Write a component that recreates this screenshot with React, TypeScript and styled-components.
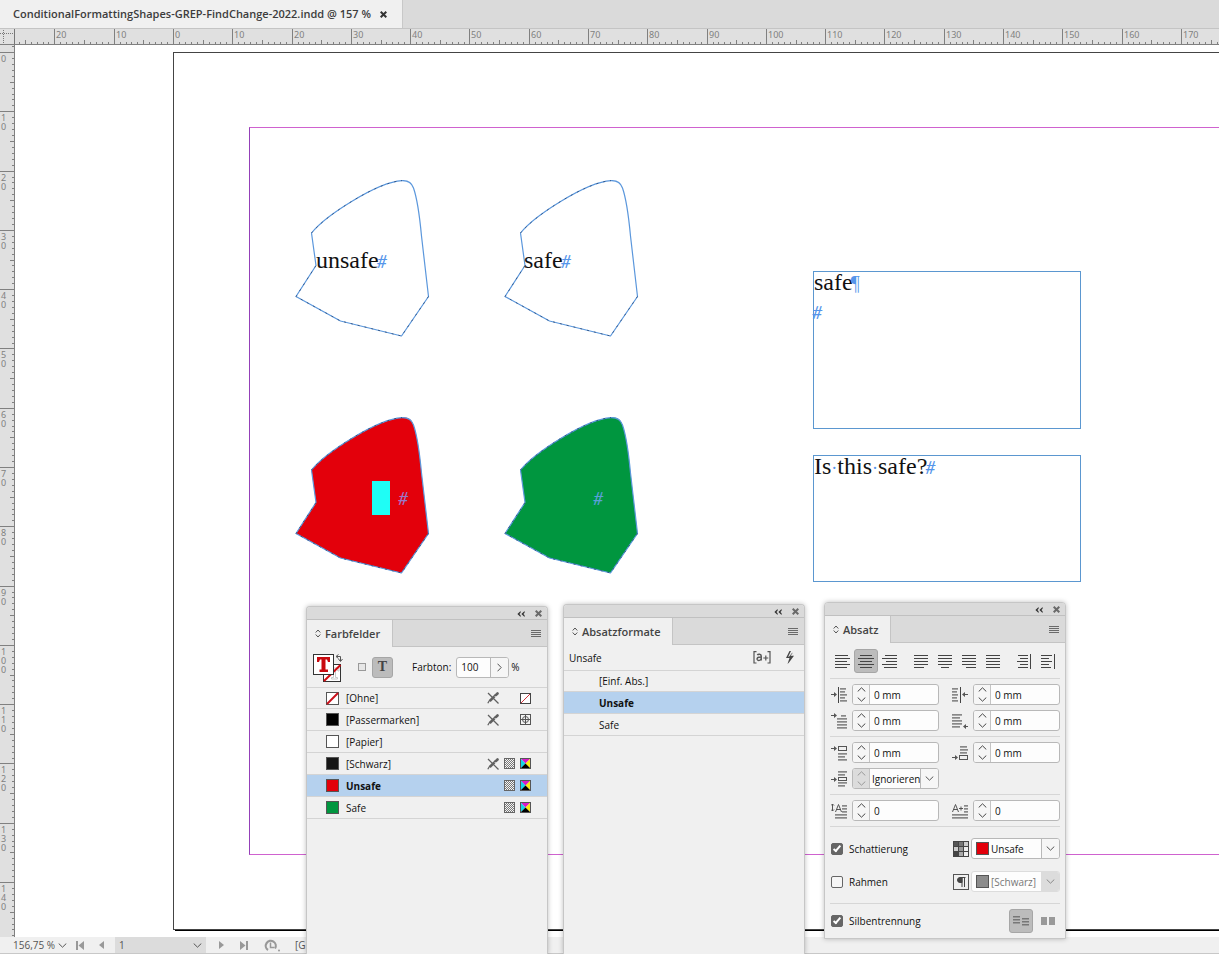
import React, { useEffect, useState } from "react";
import styled, { createGlobalStyle } from "styled-components";

const UI = '"Open Sans", "Noto Sans", sans-serif';
const MM = 59.29 / 10;

const GlobalStyle = createGlobalStyle`
  *, *::before, *::after { box-sizing: border-box; }
  body { margin: 0; background: #f0f0f0; font-family: ${UI}; font-size: 10px; line-height: 14px; color: #111; }
  button, input, select { font: inherit; color: inherit; margin: 0; padding: 0; border: 0; background: none; outline: none; }
  svg { display: block; flex: none; }
`;

const Window = styled.div`
  position: relative;
  height: 100vh;
  display: flex;
  flex-direction: column;
  overflow: hidden;
`;

/* ---------- document tab ---------- */
const TabBar = styled.header`
  height: 29px;
  display: flex;
  background: #dadada;
  border-bottom: 1px solid #c4c4c4;
`;
const DocTab = styled.div`
  display: flex;
  align-items: center;
  gap: 9px;
  padding: 0 15px 0 13px;
  background: #f0f0f0;
  border-right: 1px solid #c8c8c8;
  color: #3c3c3c;
  font-size: 11px;
  font-weight: 600;
  white-space: nowrap;
`;
const IconButton = styled.button`
  display: flex;
  align-items: center;
  justify-content: center;
  color: #6a6a6a;
`;
const CloseTab = styled(IconButton)`
  color: #333;
`;

/* ---------- rulers ---------- */
const RulerRow = styled.div`
  display: flex;
  height: 16px;
  overflow: hidden;
  background: #e0e0e0;
  border-bottom: 1px solid #808080;
`;
const Workspace = styled.div`
  flex: 1;
  min-height: 0;
  display: flex;
`;
const SideRuler = styled.div`
  width: 15px;
  overflow: hidden;
  background: #e0e0e0;
  border-right: 1px solid #808080;
`;
const RulerDrawing = styled.svg`
  font-family: "Noto Sans", sans-serif;
  font-size: 9px;
  fill: #808080;
`;

/* ---------- canvas ---------- */
const Canvas = styled.main`
  position: relative;
  flex: 1;
  min-width: 0;
  overflow: hidden;
  background: #fff;
`;
const Page = styled.div`
  position: absolute;
  left: 158px;
  top: 7px;
  width: 1245px;
  height: 878px;
  padding: 74px 75px;
  border: 1px solid #444;
  box-shadow: 2px 1px 0 #000;
  display: flex;
`;
const Margins = styled.div`
  flex: 1;
  border: 1px solid #cf62cf;
  border-left-color: #9440b8;
`;
const Item = styled.div<{ $x: number; $y: number }>`
  position: absolute;
  left: ${(p) => p.$x}px;
  top: ${(p) => p.$y}px;
`;
const StoryText = styled.p`
  margin: 0;
  font-family: "Liberation Serif", serif;
  font-size: 24px;
  line-height: 18px;
  white-space: nowrap;
  color: #111;
`;
const TextFrame = styled(Item)<{ $h: number }>`
  width: 268px;
  height: ${(p) => p.$h}px;
  padding-top: 1px;
  border: 1px solid #5b97d0;
  display: flex;
  flex-direction: column;
  gap: 10px;
`;
const Mark = styled.span<{ $c?: string }>`
  margin-left: -2px;
  font-family: Lato, sans-serif;
  font-size: 18px;
  font-style: italic;
  line-height: 18px;
  color: ${(p) => p.$c ?? "#5595ea"};
`;
const Pilcrow = styled.span`
  margin-left: -2px;
  font-size: 20px;
  color: #5595ea;
`;
const SpaceDot = styled.span`
  font-size: 18px;
  color: #5595ea;
`;
const Selection = styled(Item)`
  width: 18px;
  height: 34px;
  background: #1ffdf5;
`;

/* ---------- status bar ---------- */
const StatusBar = styled.footer`
  height: 17px;
  display: flex;
  align-items: center;
  padding-left: 13px;
  background: #f0f0f0;
  border-bottom: 1px solid #c8c8c8;
  color: #555;
`;
const ZoomButton = styled.button`
  display: flex;
  align-items: center;
  gap: 3px;
  width: 57px;
  white-space: nowrap;
`;
const NavButton = styled(IconButton)<{ $w: number }>`
  width: ${(p) => p.$w}px;
  height: 16px;
  color: #999;
`;
const PageField = styled.label`
  display: flex;
  align-items: center;
  width: 91px;
  height: 16px;
  margin-left: 3px;
  padding: 0 4px;
  background: #dcdcdc;
  input { flex: 1; min-width: 0; }
`;

/* ---------- floating panels ---------- */
const Panel = styled.section<{ $x: number; $y: number; $open?: boolean }>`
  position: absolute;
  left: ${(p) => p.$x}px;
  top: ${(p) => p.$y}px;
  ${(p) => (p.$open ? "bottom: 0;" : "")}
  width: 242px;
  display: flex;
  flex-direction: column;
  background: #f0f0f0;
  border: 1px solid #c6c6c6;
  border-bottom-width: ${(p) => (p.$open ? 0 : 1)}px;
  border-radius: 4px 4px 0 0;
  box-shadow: 0 0 5px rgba(0, 0, 0, 0.25);
`;
const PanelGrip = styled.div`
  height: 13px;
  display: flex;
  align-items: center;
  justify-content: flex-end;
  gap: 10px;
  padding: 1px 5px 0 0;
  background: #dadada;
  border-bottom: 1px solid #c0c0c0;
  border-radius: 3px 3px 0 0;
`;
const PanelTabs = styled.div`
  height: 27px;
  display: flex;
  background: #dadada;
`;
const PanelTab = styled.h2`
  margin: 0;
  display: flex;
  align-items: center;
  gap: 4px;
  padding: 0 12px 0 8px;
  font-size: 11px;
  font-weight: 600;
  color: #444;
  background: #f0f0f0;
`;
const PanelTabRest = styled.div`
  flex: 1;
  display: flex;
  align-items: center;
  justify-content: flex-end;
  padding-right: 6px;
  border-left: 1px solid #c4c4c4;
  border-bottom: 1px solid #c4c4c4;
`;

/* swatches */
const TintBar = styled.div`
  height: 40px;
  display: flex;
  align-items: center;
  padding-left: 6px;
`;
const TargetGroup = styled.div`
  display: flex;
  align-items: center;
  gap: 6px;
  margin: 0 19px 0 14px;
`;
const ToggleButton = styled.button<{ $on?: boolean; $size: number }>`
  width: ${(p) => p.$size}px;
  height: ${(p) => p.$size}px;
  display: flex;
  align-items: center;
  justify-content: center;
  border-radius: 3px;
  color: #444;
  background: ${(p) => (p.$on ? "#bcbcbc" : "transparent")};
  border: 1px solid ${(p) => (p.$on ? "#a6a6a6" : "transparent")};
`;
const TLetter = styled.span`
  font-family: "Liberation Serif", serif;
  font-size: 14px;
  font-weight: 700;
`;
const TintLabel = styled.label`
  display: flex;
  align-items: center;
  gap: 5px;
`;
const Box = styled.div<{ $w: number; $off?: boolean }>`
  display: flex;
  width: ${(p) => p.$w}px;
  height: 21px;
  background: #fdfdfd;
  border: 1px solid ${(p) => (p.$off ? "#dcdcdc" : "#b8b8b8")};
  border-radius: 3px;
  overflow: hidden;
`;
const BoxInput = styled.input`
  flex: 1;
  min-width: 0;
  padding-left: 4px !important;
`;
const ArrowButton = styled.button<{ $off?: boolean }>`
  width: 18px;
  display: flex;
  align-items: center;
  justify-content: center;
  color: ${(p) => (p.$off ? "#888" : "#555")};
  background: ${(p) => (p.$off ? "#dcdcdc" : "#f6f6f6")} !important;
  border-left: 1px solid ${(p) => (p.$off ? "#dcdcdc" : "#b8b8b8")} !important;
`;
const Percent = styled.span`
  margin-left: 2px;
`;

const List = styled.ul`
  list-style: none;
  margin: 0;
  padding: 0;
`;
const Row = styled.li<{ $sel?: boolean; $indent: number }>`
  height: 22px;
  display: flex;
  align-items: center;
  gap: 7px;
  padding: 0 16px 0 ${(p) => p.$indent}px;
  border-bottom: 1px solid #d4d4d4;
  background: ${(p) => (p.$sel ? "#b5d1ee" : "transparent")};
  font-weight: ${(p) => (p.$sel ? 700 : 400)};
  &:first-child { border-top: 1px solid #d4d4d4; }
`;
const RowName = styled.span`
  flex: 1;
`;
const RowIcons = styled.span`
  display: grid;
  grid-template-columns: 12px 11px 11px;
  gap: 5px;
  align-items: center;
`;
const Swatch = styled.span<{ $c: string }>`
  flex: none;
  width: 13px;
  height: 13px;
  background: ${(p) => p.$c};
  border: 1px solid #555;
`;

/* paragraph styles */
const StyleBar = styled.div`
  height: 25px;
  display: flex;
  align-items: center;
  gap: 14px;
  padding: 0 9px 0 5px;
  span { flex: 1; }
`;

/* paragraph */
const ParaBody = styled.div`
  display: flex;
  flex-direction: column;
  padding: 6px 5px 0;
`;
const AlignBar = styled.div`
  display: flex;
  gap: 7px;
  padding-bottom: 5px;
`;
const AlignGroup = styled.div`
  display: flex;
`;
const Section = styled.div`
  display: flex;
  flex-direction: column;
  gap: 5px;
  padding: 5px 0;
  border-top: 1px solid #d6d6d6;
`;
const FieldRow = styled.div`
  display: grid;
  grid-template-columns: 121px 108px;
  padding-left: 1px;
`;
const FieldLabel = styled.div`
  display: flex;
  align-items: center;
  gap: 5px;
`;
const Stepper = styled.div<{ $off?: boolean }>`
  width: 17px;
  display: flex;
  flex-direction: column;
  align-items: center;
  justify-content: center;
  gap: 5px;
  background: ${(p) => (p.$off ? "#dcdcdc" : "#f6f6f6")};
  border-right: 1px solid #c4c4c4;
  button { color: ${(p) => (p.$off ? "#999" : "#444")}; }
`;
const Picker = styled.select<{ $off?: boolean }>`
  appearance: none;
  flex: 1;
  min-width: 0;
  padding-left: 2px !important;
  color: ${(p) => (p.$off ? "#777" : "#111")} !important;
  opacity: 1;
`;
const OptionRow = styled.div`
  display: flex;
  align-items: center;
  justify-content: space-between;
  height: 33px;
  padding-left: 1px;
`;
const Options = styled(Section)`
  gap: 0;
`;
const CheckLabel = styled.label`
  display: flex;
  align-items: center;
  gap: 6px;
`;
const Check = styled.input`
  appearance: none;
  position: relative;
  width: 12px;
  height: 12px;
  border: 1px solid #666 !important;
  border-radius: 2px;
  background: #f6f6f6 !important;
  &:checked { background: #666 !important; }
  &:checked::after {
    content: "";
    position: absolute;
    left: 3px;
    top: 0;
    width: 4px;
    height: 8px;
    border: solid #fff;
    border-width: 0 2px 2px 0;
    transform: rotate(40deg);
  }
`;
const ColorGroup = styled.div`
  display: flex;
  align-items: center;
  gap: 2px;
`;
const PickerSwatch = styled(Swatch)<{ $c: string }>`
  align-self: center;
  margin-left: 4px;
`;
const HyphenRow = styled(OptionRow)`
  height: 24px;
`;
const ColumnGroup = styled.div`
  display: flex;
  gap: 3px;
`;

/* ---------- drawings ---------- */
const useWindowSize = () => {
  const [size, setSize] = useState({ w: window.innerWidth, h: window.innerHeight });
  useEffect(() => {
    const onResize = () => setSize({ w: window.innerWidth, h: window.innerHeight });
    window.addEventListener("resize", onResize);
    return () => window.removeEventListener("resize", onResize);
  }, []);
  return size;
};

const HRuler = ({ length }: { length: number }) => (
  <RulerDrawing width={length} height="15">
    {Array.from({ length: Math.ceil(length / MM) }, (_, i) => i - 26).map((mm) => {
      const x = Math.round(158 + mm * MM);
      const h = mm % 10 === 0 ? 15 : mm % 5 === 0 ? 4 : 2;
      return <rect key={mm} x={x} y={15 - h} width="1" height={h} />;
    })}
    {Array.from({ length: Math.floor((length - 178) / (10 * MM)) + 3 }, (_, i) => i - 2).map((n) => (
      <text key={n} x={Math.round(158 + n * 10 * MM) + 2} y="9">
        {Math.abs(n * 10)}
      </text>
    ))}
  </RulerDrawing>
);

const VRuler = ({ length }: { length: number }) => (
  <RulerDrawing width="14" height={length}>
    {Array.from({ length: Math.ceil(length / MM) }, (_, i) => i - 1).map((mm) => {
      const y = Math.round(7 + mm * MM);
      const w = mm % 10 === 0 ? 14 : mm % 5 === 0 ? 4 : 2;
      return <rect key={mm} x={14 - w} y={y} width={w} height="1" />;
    })}
    {Array.from({ length: Math.floor((length - 45) / (10 * MM)) + 1 }, (_, n) =>
      String(n * 10)
        .split("")
        .map((d, i) => (
          <text key={`${n}-${i}`} x="1" y={Math.round(7 + n * 10 * MM) + 10 + i * 9}>
            {d}
          </text>
        ))
    )}
  </RulerDrawing>
);

const Origin = () => (
  <svg width="15" height="15" stroke="#777" strokeDasharray="1 1" shapeRendering="crispEdges">
    <path d="M0 4.5H14M3.500 1V15" fill="none" />
    <path d="M14.500 0V15" strokeDasharray="none" />
  </svg>
);

const Blob = ({ fill = "none" }: { fill?: string }) => (
  <svg width="135" height="158" fill={fill} strokeLinejoin="round">
    <path
      d="M16.500 53C30 36 82 2 107 .6C113 .4 116.500 2 118.500 8C123 21 125 40 126.500 56L133.500 116.500L106.500 156L45.500 141L1 116.500L21 85.500Z"
      stroke="#5b97dc"
      strokeWidth="1.200"
    />
    <path
      d="M16.500 53C30 36 82 2 107 .6M133.500 116.500L106.500 156L45.500 141L1 116.500L21 85.500"
      fill="none"
      stroke="#223c66"
      strokeWidth=".7"
      strokeDasharray="2 5"
    />
  </svg>
);

const Cross = () => (
  <svg width="7" height="7" viewBox="0 0 7 7" stroke="currentColor" strokeWidth="2">
    <path d="M.7.7L6.300 6.300M6.300.7L.7 6.300" />
  </svg>
);
const Collapse = () => (
  <svg width="8" height="6" viewBox="0 0 8 6" fill="#333">
    <path d="M3.600 0V1.800L2.400 3L3.600 4.200V6L.4 3ZM7.600 0V1.800L6.400 3L7.600 4.200V6L4.400 3Z" />
  </svg>
);
const Menu = () => (
  <svg width="10" height="7" fill="#6a6a6a" shapeRendering="crispEdges">
    {[0, 2, 4, 6].map((y) => (
      <rect key={y} y={y} width="10" height="1" />
    ))}
  </svg>
);
const TabCaret = () => (
  <svg width="6" height="9" viewBox="0 0 6 9" fill="none" stroke="#555">
    <path d="M.7 3.500L3 1L5.300 3.500M.7 5.500L3 8L5.300 5.500" />
  </svg>
);
const Chevron = ({ up, w = 9 }: { up?: boolean; w?: number }) => (
  <svg width={w} height="5" viewBox="0 0 9 5" fill="none" stroke="currentColor">
    <path d={up ? "M.7 4.500L4.500.8L8.300 4.500" : "M.7.5L4.500 4.200L8.300.5"} />
  </svg>
);
const ChevronRight = () => (
  <svg width="5" height="9" viewBox="0 0 5 9" fill="none" stroke="currentColor">
    <path d="M.5.7L4.200 4.500L.5 8.300" />
  </svg>
);

const FillStroke = () => (
  <svg width="31" height="31" viewBox="0 0 31 31">
    <rect x="10.500" y="12.500" width="17" height="17" fill="#fff" stroke="#333" />
    <path d="M17 16H26V19H25L24 17.500H22.500V25.500H24.500V27H18.500V25.500H20.500V17.500" fill="none" stroke="#c9c9c9" />
    <path d="M11 29L27.500 13" stroke="#d10a10" strokeWidth="2" />
    <rect x=".5" y="2.500" width="20" height="20" fill="#fff" stroke="#333" />
    <path d="M4 5H17V10H15L14 7.500H12.500V17.500H15V20H6.500V17.500H8.500V7.500H7L6 10H4Z" fill="#c90a10" />
    <path d="M23.500 4.500H27.500V9M25.500 2.500L23 4.500L25.500 6.500M25.500 7L27.500 9.500L29.500 7" fill="none" stroke="#555" strokeWidth="1" />
  </svg>
);
const SmallSquare = () => (
  <svg width="8" height="8">
    <rect x=".5" y=".5" width="7" height="7" fill="#e6e6e6" stroke="#999" />
  </svg>
);
const NoneSwatch = () => (
  <svg width="13" height="13">
    <rect x=".5" y=".5" width="12" height="12" fill="#fff" stroke="#555" />
    <path d="M1 12L12 1" stroke="#c9101a" strokeWidth="2" />
  </svg>
);
const NoEdit = () => (
  <svg width="12" height="12" viewBox="0 0 12 12" stroke="#606060" fill="none">
    <path d="M.8 11.200L2.500 8.500L8.500 2.500" strokeWidth="1.200" />
    <path d="M2.800 9.200L7.500 4.500" strokeWidth="2.400" />
    <path d="M8.800 3.200L10.500 1.500" strokeWidth="2.600" strokeLinecap="round" />
    <path d="M1 1L11.500 11.500" strokeWidth="1.200" />
  </svg>
);
const NoneSmall = () => (
  <svg width="11" height="11">
    <rect x=".5" y=".5" width="10" height="10" fill="#fff" stroke="#444" />
    <path d="M1 10L10 1" stroke="#d0303a" />
  </svg>
);
const Registration = () => (
  <svg width="11" height="11" fill="none" stroke="#555">
    <rect x=".5" y=".5" width="10" height="10" fill="#f4f4f4" />
    <circle cx="5.500" cy="5.500" r="3" />
    <path d="M5.500 1V10M1 5.500H10" />
  </svg>
);
const GraySpot = () => (
  <svg width="11" height="11" shapeRendering="crispEdges">
    <rect width="11" height="11" fill="#f4f4f4" />
    {Array.from({ length: 45 }, (_, i) => {
      const y = Math.floor(i / 5) + 1;
      const x = 1 + (i % 5) * 2 + (y % 2);
      return <rect key={i} x={x} y={y} width="1" height="1" fill="#777" />;
    })}
    <rect x=".5" y=".5" width="10" height="10" fill="none" stroke="#666" />
  </svg>
);
const Cmyk = () => (
  <svg width="11" height="11">
    <path d="M0 0H11L5.500 5.500Z" fill="#d81bc8" />
    <path d="M0 0L5.500 5.500L0 11Z" fill="#12d5e8" />
    <path d="M11 0L5.500 5.500L11 11Z" fill="#f8ec12" />
    <path d="M0 11L5.500 5.500L11 11Z" fill="#000" />
    <rect x=".5" y=".5" width="10" height="10" fill="none" stroke="#555" />
  </svg>
);

const OverrideIcon = () => (
  <svg width="18" height="13" viewBox="0 0 18 13" fill="none" stroke="#555" strokeWidth="1.200">
    <path d="M3.500.7H1V12H3.500M14.500.7H17V12H14.500" />
    <path d="M4.300 4C5 3 8.200 2.700 8.200 5V9.500M8.200 6C4.500 5.800 3.800 7 4.200 8.500C5 10 7.500 9.500 8.200 8" strokeWidth="1.500" />
    <path d="M10.300 7H15.300M12.800 4.500V9.500" />
  </svg>
);
const Bolt = () => (
  <svg width="10" height="13" viewBox="0 0 10 13" fill="#444">
    <path d="M4.500 0L1 7H4.500L2.500 13L4 11.500L9 4.800H5.500L8 1.500L6.500 2.500L4 5.800H3.200L6 0Z" />
  </svg>
);

type Bars = [number, number][];
const ALIGN: Record<string, Bars> = {
  left: [[1, 13], [1, 15], [1, 12], [1, 15], [1, 12]],
  center: [[2, 12], [0, 16], [2, 12], [0, 16], [2, 12]],
  right: [[3, 12], [0, 15], [4, 11], [0, 15], [2, 13]],
  justLeft: [[1, 14], [1, 14], [1, 14], [1, 14], [1, 10]],
  justCenter: [[1, 14], [1, 14], [1, 14], [1, 14], [4, 8]],
  justRight: [[1, 14], [1, 14], [1, 14], [1, 14], [5, 10]],
  justAll: [[1, 14], [1, 14], [1, 14], [1, 14], [1, 14]],
  toSpine: [[2, 10], [4, 8], [1, 11], [4, 8], [2, 10]],
  fromSpine: [[1, 11], [1, 8], [1, 11], [1, 8], [1, 10]],
};
const AlignIcon = ({ kind }: { kind: string }) => (
  <svg width="16" height="16" fill="#444" shapeRendering="crispEdges">
    {ALIGN[kind].map(([x, w], i) => (
      <rect key={i} x={x} y={2 + i * 3} width={w} height="1" />
    ))}
    {kind.endsWith("Spine") && <rect x="14" y="1" width="1" height="15" />}
  </svg>
);

const ARROW = "h3v-2l3 2.500l-3 2.500v-2h-3z";
const FIELD_ICONS: Record<string, { bars: [number, number, number][]; arrow?: [number, number]; extra?: React.ReactNode }> = {
  leftIndent: {
    bars: [[9, 1, 6], [9, 4, 5], [9, 7, 7], [9, 10, 5], [9, 13, 7]],
    arrow: [0, 7],
    extra: <path d="M7.500 0V16" stroke="#444" />,
  },
  rightIndent: {
    bars: [[0, 1, 6], [0, 4, 5], [0, 7, 6], [0, 10, 5], [0, 13, 6]],
    extra: (
      <>
        <path d="M8.500 0V16" stroke="#444" />
        <path d="M16 7h-3v-2l-3 2.500l3 2.500v-2h3z" fill="#555" />
      </>
    ),
  },
  firstLine: { bars: [[10, 2, 5], [6, 5, 10], [6, 8, 10], [6, 11, 10], [6, 14, 10]], arrow: [0, 2] },
  lastLine: {
    bars: [[0, 1, 10], [0, 4, 8], [0, 7, 10], [0, 10, 10], [0, 13, 8]],
    extra: <path d="M16 13h-2v-2l-3 2.500l3 2.500v-2h2z" fill="#555" />,
  },
  spaceBefore: {
    bars: [[7, 8, 9], [7, 11, 7], [7, 14, 9]],
    arrow: [0, 3],
    extra: <rect x="7.500" y="1.500" width="8" height="4" fill="none" stroke="#555" />,
  },
  spaceAfter: {
    bars: [[8, 1, 7], [8, 4, 8], [8, 7, 7]],
    arrow: [0, 12],
    extra: <rect x="7.500" y="10.500" width="8" height="4" fill="none" stroke="#555" />,
  },
  spaceBetween: {
    bars: [[7, 0, 9], [7, 3, 7], [7, 11, 9], [7, 14, 7]],
    arrow: [0, 8],
    extra: <rect x="7.500" y="6.500" width="8" height="3" fill="none" stroke="#555" />,
  },
  dropLines: {
    bars: [[11, 2, 5], [11, 5, 5], [11, 8, 5], [4, 11, 12], [4, 14, 12]],
    extra: (
      <path d="M1.500 1V8M0 2.500L1.500 1L3 2.500M0 6.500L1.500 8L3 6.500M4.500 9L7.500 1.500L10.500 9M5.500 6.500H9.500" fill="none" stroke="#555" />
    ),
  },
  dropChars: {
    bars: [[12, 2, 4], [12, 5, 4], [12, 8, 4], [0, 11, 16], [0, 14, 16]],
    extra: <path d="M.5 9L3.500 1.500L6.500 9M1.500 6.500H5.500M7 5.500H11M9 3.500V7.500" fill="none" stroke="#555" />,
  },
};
const FieldIcon = ({ kind }: { kind: string }) => {
  const icon = FIELD_ICONS[kind];
  return (
    <svg width="16" height="16" fill="#888">
      {icon.bars.map(([x, y, w]) => (
        <rect key={`${x}-${y}`} x={x} y={y} width={w} height="1.700" />
      ))}
      {icon.arrow && <path d={`M${icon.arrow[0]} ${icon.arrow[1]}${ARROW}`} fill="#555" />}
      {icon.extra}
    </svg>
  );
};

const ShadeIcon = () => (
  <svg width="16" height="16">
    <rect width="16" height="16" fill="#444" />
    {["#555", "#777", "#ccc", "#ccc", "#999", "#eee", "#444", "#aaa", "#eee"].map((c, i) => (
      <rect key={i} x={1 + (i % 3) * 5} y={1 + Math.floor(i / 3) * 5} width="4" height="4" fill={c} />
    ))}
  </svg>
);
const BorderIcon = () => (
  <svg width="16" height="16" fill="none" stroke="#444">
    <rect x=".5" y=".5" width="15" height="15" stroke="#555" />
    <path d="M7 3.500H12.500M9 3.500V13M11.500 3.500V13" />
    <path d="M9 3.500H7A2.500 2.500 0 0 0 7 8.500H9Z" fill="#444" />
  </svg>
);
const SpanIcon = () => (
  <svg width="16" height="12" fill="#777">
    {[0, 3, 6].map((y) => (
      <rect key={y} y={y + 1} width="7" height="1.500" />
    ))}
    {[3, 6, 9].map((y) => (
      <rect key={y} x="9" y={y} width="7" height="1.500" />
    ))}
  </svg>
);
const SplitIcon = () => (
  <svg width="14" height="8" fill="#999">
    <rect width="6" height="8" />
    <rect x="8" width="6" height="8" />
  </svg>
);

/* ---------- composed parts ---------- */
const PanelHead = ({ title }: { title: string }) => (
  <>
    <PanelGrip>
      <IconButton aria-label={`${title} minimieren`}>
        <Collapse />
      </IconButton>
      <IconButton aria-label={`${title} schließen`}>
        <Cross />
      </IconButton>
    </PanelGrip>
    <PanelTabs>
      <PanelTab>
        <TabCaret />
        {title}
      </PanelTab>
      <PanelTabRest>
        <IconButton aria-label={`${title} Menü`}>
          <Menu />
        </IconButton>
      </PanelTabRest>
    </PanelTabs>
  </>
);

const StepButtons = ({ off }: { off?: boolean }) => (
  <Stepper $off={off}>
    <IconButton disabled={off} aria-label="Erhöhen">
      <Chevron up />
    </IconButton>
    <IconButton disabled={off} aria-label="Verringern">
      <Chevron />
    </IconButton>
  </Stepper>
);

const NumberField = ({ icon, label, value }: { icon: string; label: string; value: string }) => (
  <FieldLabel>
    <FieldIcon kind={icon} />
    <Box $w={87}>
      <StepButtons />
      <BoxInput aria-label={label} defaultValue={value} />
    </Box>
  </FieldLabel>
);

const ColorField = ({ label, color, value, off }: { label: string; color: string; value: string; off?: boolean }) => (
  <Box $w={89} $off={off}>
    <PickerSwatch $c={color} />
    <Picker aria-label={label} $off={off} disabled={off} defaultValue={value}>
      <option>{value}</option>
    </Picker>
    <ArrowButton $off={off} disabled={off} aria-label={`${label} öffnen`}>
      <Chevron />
    </ArrowButton>
  </Box>
);

const SWATCHES = [
  { name: "[Ohne]", color: "", icons: [<NoEdit />, null, <NoneSmall />] },
  { name: "[Passermarken]", color: "#000", icons: [<NoEdit />, null, <Registration />] },
  { name: "[Papier]", color: "#fff", icons: [] },
  { name: "[Schwarz]", color: "#161616", icons: [<NoEdit />, <GraySpot />, <Cmyk />] },
  { name: "Unsafe", color: "#e3000b", icons: [null, <GraySpot />, <Cmyk />] },
  { name: "Safe", color: "#00963f", icons: [null, <GraySpot />, <Cmyk />] },
];

const SwatchesPanel = () => (
  <Panel $x={306} $y={606} $open>
    <PanelHead title="Farbfelder" />
    <TintBar>
      <FillStroke />
      <TargetGroup>
        <IconButton aria-label="Formatierung wirkt sich auf Rahmen aus">
          <SmallSquare />
        </IconButton>
        <ToggleButton $on $size={21} aria-label="Formatierung wirkt sich auf Text aus">
          <TLetter>T</TLetter>
        </ToggleButton>
      </TargetGroup>
      <TintLabel>
        Farbton:
        <Box $w={53}>
          <BoxInput defaultValue="100" />
          <ArrowButton aria-label="Farbton wählen">
            <ChevronRight />
          </ArrowButton>
        </Box>
      </TintLabel>
      <Percent>%</Percent>
    </TintBar>
    <List>
      {SWATCHES.map((s) => (
        <Row key={s.name} $sel={s.name === "Unsafe"} $indent={19}>
          {s.color ? <Swatch $c={s.color} /> : <NoneSwatch />}
          <RowName>{s.name}</RowName>
          <RowIcons>
            {s.icons.map((icon, i) => (
              <span key={i}>{icon}</span>
            ))}
          </RowIcons>
        </Row>
      ))}
    </List>
  </Panel>
);

const StylesPanel = () => (
  <Panel $x={563} $y={604} $open>
    <PanelHead title="Absatzformate" />
    <StyleBar>
      <span>Unsafe</span>
      <IconButton aria-label="Abweichungen hervorheben">
        <OverrideIcon />
      </IconButton>
      <IconButton aria-label="Schnell anwenden">
        <Bolt />
      </IconButton>
    </StyleBar>
    <List>
      {["[Einf. Abs.]", "Unsafe", "Safe"].map((name) => (
        <Row key={name} $sel={name === "Unsafe"} $indent={35}>
          <RowName>{name}</RowName>
        </Row>
      ))}
    </List>
  </Panel>
);

const ALIGN_GROUPS = [
  ["left", "center", "right"],
  ["justLeft", "justCenter", "justRight", "justAll"],
  ["toSpine", "fromSpine"],
];

const ParagraphPanel = () => (
  <Panel $x={824} $y={602}>
    <PanelHead title="Absatz" />
    <ParaBody>
      <AlignBar>
        {ALIGN_GROUPS.map((group) => (
          <AlignGroup key={group[0]}>
            {group.map((kind) => (
              <ToggleButton key={kind} $on={kind === "center"} $size={24} aria-label={kind}>
                <AlignIcon kind={kind} />
              </ToggleButton>
            ))}
          </AlignGroup>
        ))}
      </AlignBar>
      <Section>
        <FieldRow>
          <NumberField icon="leftIndent" label="Einzug links" value="0 mm" />
          <NumberField icon="rightIndent" label="Einzug rechts" value="0 mm" />
        </FieldRow>
        <FieldRow>
          <NumberField icon="firstLine" label="Einzug links in erster Zeile" value="0 mm" />
          <NumberField icon="lastLine" label="Einzug rechts in letzter Zeile" value="0 mm" />
        </FieldRow>
      </Section>
      <Section>
        <FieldRow>
          <NumberField icon="spaceBefore" label="Abstand davor" value="0 mm" />
          <NumberField icon="spaceAfter" label="Abstand danach" value="0 mm" />
        </FieldRow>
        <FieldRow>
          <FieldLabel>
            <FieldIcon kind="spaceBetween" />
            <Box $w={87}>
              <StepButtons off />
              <Picker aria-label="Abstand zwischen Absätzen" defaultValue="Ignorieren">
                <option>Ignorieren</option>
              </Picker>
              <ArrowButton aria-label="Abstand wählen">
                <Chevron />
              </ArrowButton>
            </Box>
          </FieldLabel>
        </FieldRow>
      </Section>
      <Section>
        <FieldRow>
          <NumberField icon="dropLines" label="Initialhöhe" value="0" />
          <NumberField icon="dropChars" label="Initialzeichen" value="0" />
        </FieldRow>
      </Section>
      <Options>
        <OptionRow>
          <CheckLabel>
            <Check type="checkbox" defaultChecked />
            Schattierung
          </CheckLabel>
          <ColorGroup>
            <ShadeIcon />
            <ColorField label="Schattierungsfarbe" color="#e3000b" value="Unsafe" />
          </ColorGroup>
        </OptionRow>
        <OptionRow>
          <CheckLabel>
            <Check type="checkbox" />
            Rahmen
          </CheckLabel>
          <ColorGroup>
            <BorderIcon />
            <ColorField label="Rahmenfarbe" color="#8c8c8c" value="[Schwarz]" off />
          </ColorGroup>
        </OptionRow>
      </Options>
      <Section>
        <HyphenRow>
          <CheckLabel>
            <Check type="checkbox" defaultChecked />
            Silbentrennung
          </CheckLabel>
          <ColumnGroup>
            <ToggleButton $on $size={24} aria-label="Eine Spalte">
              <SpanIcon />
            </ToggleButton>
            <ToggleButton $size={24} aria-label="Spalten teilen">
              <SplitIcon />
            </ToggleButton>
          </ColumnGroup>
        </HyphenRow>
      </Section>
    </ParaBody>
  </Panel>
);

export default function App() {
  const size = useWindowSize();
  return (
    <Window>
      <GlobalStyle />
      <TabBar>
        <DocTab>
          ConditionalFormattingShapes-GREP-FindChange-2022.indd @ 157 %
          <CloseTab aria-label="Dokument schließen">
            <Cross />
          </CloseTab>
        </DocTab>
      </TabBar>
      <RulerRow>
        <Origin />
        <HRuler length={size.w - 15} />
      </RulerRow>
      <Workspace>
        <SideRuler>
          <VRuler length={size.h - 62} />
        </SideRuler>
        <Canvas>
          <Page>
            <Margins />
          </Page>
          <Item $x={280} $y={135}>
            <Blob />
          </Item>
          <Item $x={489} $y={135}>
            <Blob />
          </Item>
          <Item $x={280} $y={372}>
            <Blob fill="#e3000b" />
          </Item>
          <Item $x={489} $y={372}>
            <Blob fill="#00963f" />
          </Item>
          <Item $x={301} $y={206}>
            <StoryText>
              unsafe<Mark>#</Mark>
            </StoryText>
          </Item>
          <Item $x={509} $y={206}>
            <StoryText>
              safe<Mark>#</Mark>
            </StoryText>
          </Item>
          <Selection $x={357} $y={436} />
          <Item $x={385} $y={443}>
            <StoryText>
              <Mark $c="#9a78c8">#</Mark>
            </StoryText>
          </Item>
          <Item $x={580} $y={443}>
            <StoryText>
              <Mark $c="#5ba0d8">#</Mark>
            </StoryText>
          </Item>
          <TextFrame $x={798} $y={226} $h={158}>
            <StoryText>
              safe<Pilcrow>¶</Pilcrow>
            </StoryText>
            <StoryText>
              <Mark>#</Mark>
            </StoryText>
          </TextFrame>
          <TextFrame $x={798} $y={410} $h={127}>
            <StoryText>
              Is<SpaceDot>·</SpaceDot>this<SpaceDot>·</SpaceDot>safe?<Mark>#</Mark>
            </StoryText>
          </TextFrame>
        </Canvas>
      </Workspace>
      <StatusBar>
        <ZoomButton>
          156,75 % <Chevron />
        </ZoomButton>
        <NavButton $w={20} aria-label="Erste Seite">
          <svg width="9" height="9" fill="currentColor">
            <path d="M0 0H2V9H0ZM8 0V9L2.500 4.500Z" />
          </svg>
        </NavButton>
        <NavButton $w={22} aria-label="Vorherige Seite">
          <svg width="5" height="8" fill="currentColor">
            <path d="M5 0V8L0 4Z" />
          </svg>
        </NavButton>
        <PageField>
          <input aria-label="Seite" defaultValue="1" />
          <Chevron />
        </PageField>
        <NavButton $w={30} aria-label="Nächste Seite">
          <svg width="5" height="8" fill="currentColor">
            <path d="M0 0V8L5 4Z" />
          </svg>
        </NavButton>
        <NavButton $w={14} aria-label="Letzte Seite">
          <svg width="9" height="9" fill="currentColor">
            <path d="M7 0H9V9H7ZM1 0V9L6.500 4.500Z" />
          </svg>
        </NavButton>
        <NavButton $w={45} aria-label="Preflight">
          <svg width="17" height="13" fill="none" stroke="currentColor">
            <path d="M4 11A5 5 0 1 1 11 9.500" strokeWidth="2.200" />
            <path d="M6.500 3.500V8.500H10" strokeWidth="1.500" />
            <circle cx="15" cy="11.500" r="1" fill="currentColor" stroke="none" />
          </svg>
        </NavButton>
        [G
      </StatusBar>
      <SwatchesPanel />
      <StylesPanel />
      <ParagraphPanel />
    </Window>
  );
}
